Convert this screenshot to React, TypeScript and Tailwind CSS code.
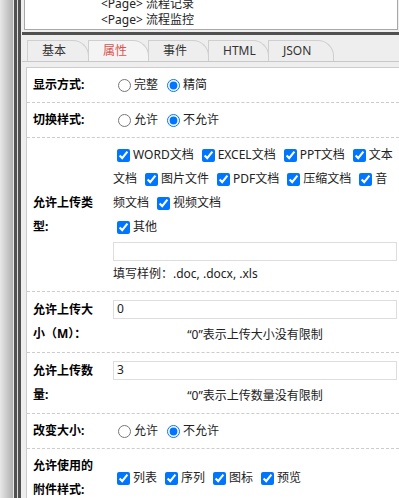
import type { ReactNode } from 'react';

const font = { fontFamily: '"Noto Sans", "Noto Sans CJK SC", sans-serif' };

function Check({ label }: { label: string }) {
  return (
    <span className="flex items-center mr-[4px]">
      <input type="checkbox" defaultChecked className="ml-[4px] mr-[3px] w-[13px] h-[13px]" />
      <span>{label}</span>
    </span>
  );
}

function Radio({ label, checked, name }: { label: string; checked?: boolean; name: string }) {
  return (
    <span className="flex items-center mr-[4px]">
      <input type="radio" name={name} defaultChecked={checked} className="ml-[5px] mr-[3px] w-[13px] h-[13px]" />
      <span>{label}</span>
    </span>
  );
}

function Line({ children }: { children: ReactNode }) {
  return <div className="flex items-center h-[24px] whitespace-nowrap">{children}</div>;
}

function Row({ label, children }: { label: string; children: ReactNode }) {
  return (
    <div className="flex items-center py-[5px] border-b border-dashed border-[#cccccc]">
      <div className="w-[86px] shrink-0 pl-[6px] pr-[14px] font-bold text-black leading-[24px]">{label}</div>
      <div className="flex-1 min-w-0 pr-[2px] text-[#222] leading-[24px]">{children}</div>
    </div>
  );
}

const tabs = [
  { name: '基本', w: 'w-[62px]' },
  { name: '属性', w: 'w-[61px]', active: true },
  { name: '事件', w: 'w-[61px]' },
  { name: 'HTML', w: 'w-[61px]' },
  { name: 'JSON', w: 'w-[66px]' },
];

export default function App() {
  return (
    <div className="flex w-[399px] h-[498px] overflow-hidden text-[12px]" style={font}>
      {/* window edge */}
      <div className="w-[13px] shrink-0 bg-gradient-to-r from-[#e8e8e8] to-[#b0b0b0]" />
      <div className="w-px shrink-0 bg-[#e6e6e6]" />
      <div className="w-[3px] shrink-0 bg-[#505050]" />
      <div className="w-px shrink-0 bg-[#dddddd]" />
      <div className="w-[3px] shrink-0 bg-[#505050]" />

      <div className="flex-1 min-w-0 flex flex-col bg-[#eeeeee]">
        {/* tree panel */}
        <div className="ml-[3px] mr-[1px] h-[30px] shrink-0 overflow-hidden bg-white border-l border-r border-b border-[#a8a8a8]">
          <div className="-mt-[4px] pl-[76px] leading-[16px] text-[#222]">
            <div>&lt;Page&gt; 流程记录</div>
            <div>&lt;Page&gt; 流程监控</div>
          </div>
        </div>
        <div className="h-[2px] shrink-0" />
        <div className="ml-px h-[3px] shrink-0 bg-[#505050]" />

        {/* tabs */}
        <div className="ml-px h-[27px] shrink-0 pt-[5px] pl-[5px] flex border-b border-[#c8c8c8]">
          {tabs.map((t) => (
            <div
              key={t.name}
              className={`${t.w} h-[21px] -mr-px pl-[14px] flex items-center border-l border-t border-r border-[#cfcfcf] rounded-tr-[16px] ${
                t.active ? 'bg-[#f4f4f4] text-[#d9534f]' : 'text-[#333]'
              }`}
            >
              {t.name}
            </div>
          ))}
        </div>
        <div className="h-[5px] shrink-0" />

        {/* property form */}
        <div className="ml-[5px] flex-1 bg-white border-l border-t border-[#cccccc]">
          <Row label="显示方式:">
            <Line>
              <Radio name="mode" label="完整" />
              <Radio name="mode" label="精简" checked />
            </Line>
          </Row>
          <Row label="切换样式:">
            <Line>
              <Radio name="switch" label="允许" />
              <Radio name="switch" label="不允许" checked />
            </Line>
          </Row>
          <Row label="允许上传类型:">
            <Line>
              <Check label="WORD文档" />
              <Check label="EXCEL文档" />
              <Check label="PPT文档" />
              <Check label="文本" />
            </Line>
            <Line>
              <span className="mr-[4px]">文档</span>
              <Check label="图片文件" />
              <Check label="PDF文档" />
              <Check label="压缩文档" />
              <Check label="音" />
            </Line>
            <Line>
              <span className="mr-[4px]">频文档</span>
              <Check label="视频文档" />
            </Line>
            <Line>
              <Check label="其他" />
            </Line>
            <input className="block w-full h-[19px] mt-[3px] mb-[1px] border border-[#dddddd] outline-none" />
            <div>填写样例：.doc, .docx, .xls</div>
          </Row>
          <Row label="允许上传大小（M）：">
            <div className="h-[24px] flex items-center">
              <input defaultValue="0" className="block w-full h-[19px] pl-[3px] border border-[#dddddd] outline-none" />
            </div>
            <div className="mt-[2px] text-center">“0”表示上传大小没有限制</div>
          </Row>
          <Row label="允许上传数量:">
            <div className="h-[24px] flex items-center">
              <input defaultValue="3" className="block w-full h-[19px] pl-[3px] border border-[#dddddd] outline-none" />
            </div>
            <div className="mt-[2px] text-center">“0”表示上传数量没有限制</div>
          </Row>
          <Row label="改变大小:">
            <Line>
              <Radio name="resize" label="允许" />
              <Radio name="resize" label="不允许" checked />
            </Line>
          </Row>
          <Row label="允许使用的附件样式:">
            <Line>
              <Check label="列表" />
              <Check label="序列" />
              <Check label="图标" />
              <Check label="预览" />
            </Line>
          </Row>
        </div>
      </div>
    </div>
  );
}
